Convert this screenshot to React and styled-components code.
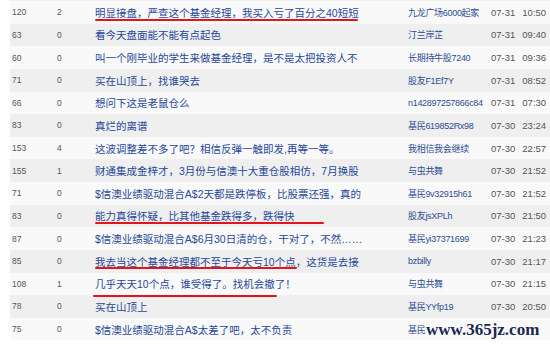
import React from 'react'
import styled, { createGlobalStyle } from 'styled-components'

const rows = [
  ['120', '2', '明显接盘，严查这个基金经理，我买入亏了百分之40短短', '九龙广场6000起家', '07-31', '10:50', { left: 0, width: 263, top: 18 }],
  ['63', '0', '看今天盘面能不能有点起色', '汀兰岸芷', '07-31', '09:40'],
  ['60', '0', '叫一个刚毕业的学生来做基金经理，是不是太把投资人不', '长期持牛股7240', '07-31', '09:36'],
  ['71', '0', '买在山顶上，找谁哭去', '股友F1Ef7Y', '07-31', '08:52'],
  ['66', '0', '想问下这是老鼠仓么', 'n142897257866c84', '07-31', '07:30'],
  ['83', '0', '真烂的离谱', '基民619852Rx98', '07-30', '23:24'],
  ['153', '4', '这波调整差不多了吧？相信反弹一触即发,再等一等。', '我相信我会继续', '07-30', '22:57'],
  ['155', '1', '财通集成金梓才，3月份与信澳十大重仓股相仿，7月换股', '与虫共舞', '07-30', '21:52'],
  ['71', '0', '$信澳业绩驱动混合A$2天都是跌停板，比股票还强，真的', '基民9v32915h61', '07-30', '21:52'],
  ['83', '0', '能力真得怀疑，比其他基金跌得多，跌得快', '股友jsXPLh', '07-30', '21:50', { left: 0, width: 229, top: 17 }],
  ['87', '0', '$信澳业绩驱动混合A$6月30日清的仓，干对了，不然……', '基民yi37371699', '07-30', '21:23'],
  ['85', '0', '我去当这个基金经理都不至于今天亏10个点，这货是去接', 'bzbilly', '07-30', '21:17', { left: 0, width: 202, top: 17 }],
  ['108', '1', '几乎天天10个点，谁受得了。找机会撤了！', '与虫共舞', '07-30', '21:15', { left: -2, width: 184, top: 22 }],
  ['78', '0', '买在山顶上', '基民YYfp19', '07-30', '20:50'],
  ['75', '0', '$信澳业绩驱动混合A$太差了吧，太不负责', '基民', '', ''],
]

export default function App() {
  return (
    <>
      <Global />
      <Page>
        <List>
          {rows.map(([reads, replies, title, author, date, time, mark], i) => (
            <Row key={i} $odd={i % 2 === 1}>
              <Num>{reads}</Num>
              <Num>{replies}</Num>
              <Title>
                {title}
                {mark && <Mark $left={mark.left} $width={mark.width} $top={mark.top} />}
              </Title>
              <Author>{author}</Author>
              <When>
                <span>{date}</span>
                <span>{time}</span>
              </When>
            </Row>
          ))}
        </List>
        <Watermark>www.365jz.com</Watermark>
      </Page>
    </>
  )
}

const Global = createGlobalStyle`
  html, body {
    margin: 0;
    background: #fff;
  }
  body {
    font-family: "Liberation Sans", "Noto Sans CJK SC", sans-serif;
  }
`

const Page = styled.div`
  position: relative;
  width: 550px;
  height: 345px;
  overflow: hidden;
  background: #fff;
`

const List = styled.div`
  margin-left: 10px;
  border-top: 1px solid #efefef;
`

const Row = styled.div`
  display: grid;
  grid-template-columns: 45px 38px 313px 83px 1fr;
  align-items: center;
  height: 22.64px;
  background: ${p => (p.$odd ? '#efefef' : '#f9f9f9')};
  & > * {
    padding-left: 2px;
  }
`

const Num = styled.div`
  font-family: "Liberation Sans", sans-serif;
  font-size: 8.5px;
  color: #555;
`

const Title = styled.div`
  position: relative;
  height: 100%;
  display: flex;
  align-items: center;
  white-space: nowrap;
  font-family: "Liberation Sans", "Noto Sans CJK SC", sans-serif;
  font-size: 10.5px;
  color: #27479a;
`

const Mark = styled.span`
  position: absolute;
  left: ${p => p.$left + 2}px;
  top: ${p => p.$top}px;
  width: ${p => p.$width}px;
  height: 2px;
  border-radius: 1px;
  background: #e5141c;
`

const Author = styled.div`
  white-space: nowrap;
  overflow: hidden;
  font-family: "Liberation Sans", "Noto Sans CJK SC", sans-serif;
  font-size: 9px;
  letter-spacing: -0.3px;
  color: #2d4d94;
`

const When = styled.div`
  display: flex;
  gap: 7px;
  font-family: "Liberation Sans", sans-serif;
  font-size: 9.5px;
  color: #555;
`

const Watermark = styled.div`
  position: absolute;
  left: 426px;
  top: 320px;
  font-family: "Liberation Serif", serif;
  font-weight: bold;
  font-size: 17px;
  line-height: 20px;
  color: #1b2752;
  text-shadow: 0 0 2px #fff, 0 0 2px #fff, 0 0 3px #fff;
`
